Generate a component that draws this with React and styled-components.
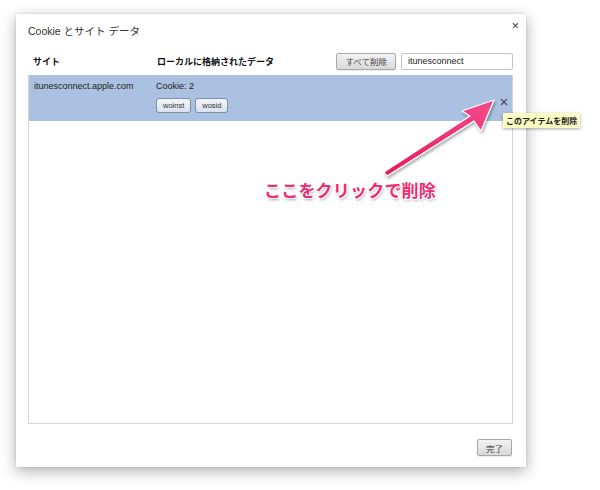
import styled, { createGlobalStyle } from "styled-components";

const GlobalStyle = createGlobalStyle`
  html, body {
    margin: 0;
    padding: 0;
    background: #fff;
  }
  body {
    font-family: "Liberation Sans", "Noto Sans CJK JP", sans-serif;
    color: #222;
  }
`;

const Page = styled.div`
  position: relative;
  width: 600px;
  height: 490px;
  overflow: hidden;
  background: #fff;
`;

const Dialog = styled.div`
  position: absolute;
  left: 16px;
  top: 14px;
  width: 510px;
  height: 453px;
  box-sizing: border-box;
  padding: 0 13px 0 12px;
  background: #fff;
  box-shadow: 0 4px 14px rgba(0, 0, 0, 0.32), 0 0 2px rgba(0, 0, 0, 0.15);
  display: flex;
  flex-direction: column;
`;

const TitleBar = styled.div`
  display: flex;
  justify-content: space-between;
  align-items: flex-start;
  height: 39px;
`;

const Title = styled.div`
  margin-top: 9px;
  font-size: 10.5px;
  color: #333;
`;

const CloseButton = styled.div`
  margin-top: 5px;
  margin-right: -6px;
  font-size: 13px;
  color: #444;
  line-height: 1;
`;

const HeaderRow = styled.div`
  display: flex;
  align-items: center;
  height: 16px;
  padding-left: 5px;
`;

const HeaderCell = styled.div`
  width: ${p => p.$width || "auto"};
  font-size: 9px;
  font-weight: bold;
  color: #111;
`;

const HeaderTools = styled.div`
  margin-left: auto;
  display: flex;
  gap: 5px;
`;

const GreyButton = styled.div`
  box-sizing: border-box;
  height: 17px;
  padding: 0 8px;
  display: flex;
  align-items: center;
  justify-content: center;
  font-size: 8.5px;
  color: #444;
  border: 1px solid #a8a8a8;
  border-radius: 2px;
  background: linear-gradient(#f2f2f2, #d9d9d9);
  box-shadow: 0 1px 1px rgba(0, 0, 0, 0.08);
`;

const SearchBox = styled.div`
  box-sizing: border-box;
  width: 112px;
  height: 17px;
  padding: 0 6px;
  display: flex;
  align-items: center;
  font-size: 9px;
  color: #222;
  border: 1px solid #c4c4c4;
  border-radius: 2px;
  background: #fff;
`;

const List = styled.div`
  margin-top: 6px;
  height: 349px;
  box-sizing: border-box;
  border: 1px solid #d4d4d4;
  border-top: none;
`;

const Row = styled.div`
  position: relative;
  display: flex;
  height: 46px;
  box-sizing: border-box;
  padding: 6px 5px;
  background: #abc1e1;
`;

const SiteCell = styled.div`
  width: 122px;
  font-size: 9px;
  color: #222;
`;

const DataCell = styled.div`
  display: flex;
  flex-direction: column;
  gap: 7px;
  font-size: 9px;
  color: #222;
`;

const Chips = styled.div`
  display: flex;
  gap: 4px;
`;

const Chip = styled.div`
  box-sizing: border-box;
  height: 15px;
  padding: 0 6px;
  display: flex;
  align-items: center;
  font-size: 7.5px;
  color: #333;
  border: 1px solid #7f8ea8;
  border-radius: 3px;
  background: linear-gradient(#f1f4f9, #dbe2ee);
`;

const RemoveX = styled.div`
  position: absolute;
  right: 4px;
  top: 17px;
  width: 8px;
  height: 8px;
`;

const Footer = styled.div`
  display: flex;
  justify-content: flex-end;
  padding: 15px 1px 0 0;
`;

const Tooltip = styled.div`
  position: absolute;
  left: 503px;
  top: 113px;
  padding: 2px 3px;
  font-size: 8px;
  font-weight: bold;
  color: #222;
  background: #fdfdc4;
  box-shadow: 0 1px 3px rgba(0, 0, 0, 0.35);
  white-space: nowrap;
`;

const Annotation = styled.div`
  position: absolute;
  left: 264px;
  top: 177px;
  font-family: "Noto Sans CJK JP", sans-serif;
  font-size: 17px;
  font-weight: bold;
  letter-spacing: 0.2px;
  color: #ee2d72;
  text-shadow:
    -1px -1px 0 #fff, 1px -1px 0 #fff, -1px 1px 0 #fff, 1px 1px 0 #fff,
    1px 2px 3px rgba(0, 0, 0, 0.35);
  white-space: nowrap;
`;

const ArrowSvg = styled.svg`
  position: absolute;
  left: 370px;
  top: 90px;
  overflow: visible;
`;

function Arrow() {
  return (
    <ArrowSvg width="140" height="95" viewBox="0 0 140 95">
      <defs>
        <linearGradient id="arrowFill" x1="0" y1="1" x2="1" y2="0">
          <stop offset="0" stopColor="#e8195f" />
          <stop offset="1" stopColor="#f34a8a" />
        </linearGradient>
        <filter id="arrowShadow" x="-20%" y="-20%" width="140%" height="140%">
          <feDropShadow dx="1" dy="2" stdDeviation="1.5" floodColor="#000" floodOpacity="0.35" />
        </filter>
      </defs>
      <polygon
        points="14,82 100,26 92,21 124,10 111,41 104,31 17,86"
        fill="url(#arrowFill)"
        stroke="#fff"
        strokeWidth="1.2"
        strokeLinejoin="round"
        filter="url(#arrowShadow)"
      />
    </ArrowSvg>
  );
}

export default function App() {
  return (
    <Page>
      <GlobalStyle />
      <Dialog>
        <TitleBar>
          <Title>Cookie とサイト データ</Title>
          <CloseButton>×</CloseButton>
        </TitleBar>
        <HeaderRow>
          <HeaderCell $width="124px">サイト</HeaderCell>
          <HeaderCell>ローカルに格納されたデータ</HeaderCell>
          <HeaderTools>
            <GreyButton>すべて削除</GreyButton>
            <SearchBox>itunesconnect</SearchBox>
          </HeaderTools>
        </HeaderRow>
        <List>
          <Row>
            <SiteCell>itunesconnect.apple.com</SiteCell>
            <DataCell>
              <div>Cookie: 2</div>
              <Chips>
                <Chip>woinst</Chip>
                <Chip>wosid</Chip>
              </Chips>
            </DataCell>
            <RemoveX>
              <svg width="8" height="8" viewBox="0 0 8 8">
                <path d="M1 1 L7 7 M7 1 L1 7" stroke="#4a4f5a" strokeWidth="1.2" />
              </svg>
            </RemoveX>
          </Row>
        </List>
        <Footer>
          <GreyButton>完了</GreyButton>
        </Footer>
      </Dialog>
      <Arrow />
      <Annotation>ここをクリックで削除</Annotation>
      <Tooltip>このアイテムを削除</Tooltip>
    </Page>
  );
}
